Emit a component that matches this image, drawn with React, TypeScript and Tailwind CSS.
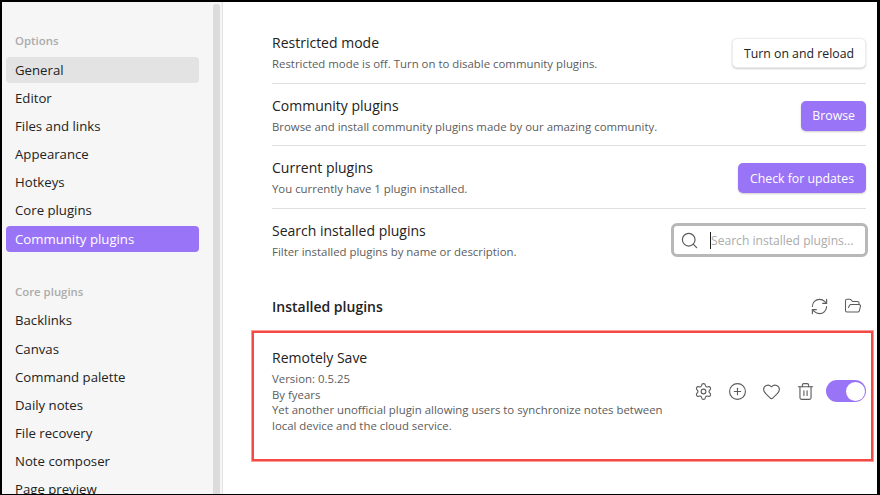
import { Search, RefreshCw, FolderOpen, Settings, CirclePlus, Heart, Trash2 } from "lucide-react";

const optionItems = ["General", "Editor", "Files and links", "Appearance", "Hotkeys", "Core plugins", "Community plugins"];
const coreItems = ["Backlinks", "Canvas", "Command palette", "Daily notes", "File recovery", "Note composer", "Page preview"];

function NavItem({ label }: { label: string }) {
  const active = label === "Community plugins";
  const selected = label === "General";
  return (
    <div
      className={`h-[26px] rounded-[4px] pl-[9px] pt-[1px] mb-[2.1px] flex items-center text-[13.2px] ${
        active ? "bg-[#9a74f7] text-white" : selected ? "bg-[#e3e3e3] text-[#222222]" : "text-[#222222]"
      }`}
    >
      {label}
    </div>
  );
}

function Setting({ title, desc, last, children }: { title: string; desc: string; last?: boolean; children: React.ReactNode }) {
  return (
    <div className={`h-[62.5px] flex items-center justify-between ${last ? "" : "border-b border-[#e0e0e0]"}`}>
      <div className="mt-[2px]">
        <div className="text-[14px] leading-[20px] text-[#222222]">{title}</div>
        <div className="mt-[2px] text-[11.4px] leading-[17px] text-[#5c5c5c]">{desc}</div>
      </div>
      {children}
    </div>
  );
}

function PurpleButton({ label }: { label: string }) {
  return (
    <button
      className={`mt-[3px] h-[30px] pt-[1px] rounded-[5px] bg-[#9a74f7] text-white text-[12.3px] shadow-[0_1px_2px_rgba(0,0,0,0.2)] ${
        label === "Browse" ? "px-[11px]" : "px-[12px]"
      }`}
    >
      {label}
    </button>
  );
}

export default function App() {
  return (
    <div
      className="w-[880px] h-[495px] overflow-hidden bg-white border-t-2 border-l-2 border-b border-r-[3px] border-black flex"
      style={{ fontFamily: '"Open Sans", "Noto Sans", sans-serif' }}
    >
      <aside className="w-[221px] h-full shrink-0 flex bg-[#f6f6f6] border-r border-[#e3e3e3] overflow-hidden">
        <nav className="w-[211px] shrink-0 pl-[4px] pr-[14px] pt-[29px]">
          <div className="h-[20px] pl-[9px] mb-[6.4px] text-[11.4px] font-semibold text-[#ababab] flex items-center">Options</div>
          {optionItems.map((item) => (
            <NavItem key={item} label={item} />
          ))}
          <div className="h-[20px] pl-[9px] mt-[29.6px] mb-[6.35px] text-[11.4px] font-semibold text-[#ababab] flex items-center">Core plugins</div>
          {coreItems.map((item) => (
            <NavItem key={item} label={item} />
          ))}
        </nav>
        <div className="w-[7px] h-full mt-[2px] rounded-[3px] bg-[#dcdcdc]" />
      </aside>

      <main className="flex-1 min-w-0 pl-[49px] pr-[11px] pt-[19px]">
        <Setting title="Restricted mode" desc="Restricted mode is off. Turn on to disable community plugins.">
          <button className="mt-[3px] h-[30px] px-[11px] pt-[1px] rounded-[5px] bg-white text-[#222222] text-[12.3px] border border-[#ececec] shadow-[0_1px_2px_rgba(0,0,0,0.2)]">
            Turn on and reload
          </button>
        </Setting>
        <Setting title="Community plugins" desc="Browse and install community plugins made by our amazing community.">
          <PurpleButton label="Browse" />
        </Setting>
        <Setting title="Current plugins" desc="You currently have 1 plugin installed.">
          <PurpleButton label="Check for updates" />
        </Setting>
        <Setting title="Search installed plugins" desc="Filter installed plugins by name or description." last>
          <div className="mt-[1px] -mr-[2px] w-[197px] h-[34px] rounded-[6px] border-[3px] border-[#b8b8b8] flex items-center pl-[6px]">
            <Search size={19} className="text-[#5c5c5c] shrink-0" strokeWidth={1.5} />
            <span className="ml-[11px] w-px h-[17px] bg-[#222222]" />
            <span className="pt-[2px] text-[12.1px] text-[#ababab]">Search installed plugins...</span>
          </div>
        </Setting>

        <div className="mt-[15px] h-[40px] flex items-center justify-between">
          <div className="text-[14px] font-semibold text-[#222222]">Installed plugins</div>
          <div className="flex items-center gap-[15px] pr-[4px] text-[#5c5c5c]">
            <RefreshCw size={19} strokeWidth={1.4} />
            <FolderOpen size={18} strokeWidth={1.4} />
          </div>
        </div>

        <div className="h-[130px] -ml-[20px] -mr-[7px] mt-[5px] border-2 border-[#f44a45] shadow-[0_0_0_1px_#fc9a96] pl-[18px] pr-[5px] flex items-center justify-between">
          <div className="w-[400px] mb-[11px]">
            <div className="text-[14px] leading-[20px] text-[#222222] mb-[3px]">Remotely Save</div>
            <div className="text-[11.4px] leading-[15.5px] text-[#5c5c5c]">
              <div>Version: 0.5.25</div>
              <div>By fyears</div>
              <div>Yet another unofficial plugin allowing users to synchronize notes between local device and the cloud service.</div>
            </div>
          </div>
          <div className="flex items-center text-[#5c5c5c] mb-[10px]">
            <Settings size={19} strokeWidth={1.4} />
            <CirclePlus size={19} strokeWidth={1.4} className="ml-[15px]" />
            <Heart size={19} strokeWidth={1.4} className="ml-[15px]" />
            <Trash2 size={19} strokeWidth={1.4} className="ml-[15px]" />
            <div className="ml-[11px] w-[40px] h-[22px] rounded-full bg-[#9a74f7] flex items-center justify-end pr-[1px]">
              <div className="w-[19px] h-[19px] rounded-full bg-white" />
            </div>
          </div>
        </div>
      </main>
    </div>
  );
}
